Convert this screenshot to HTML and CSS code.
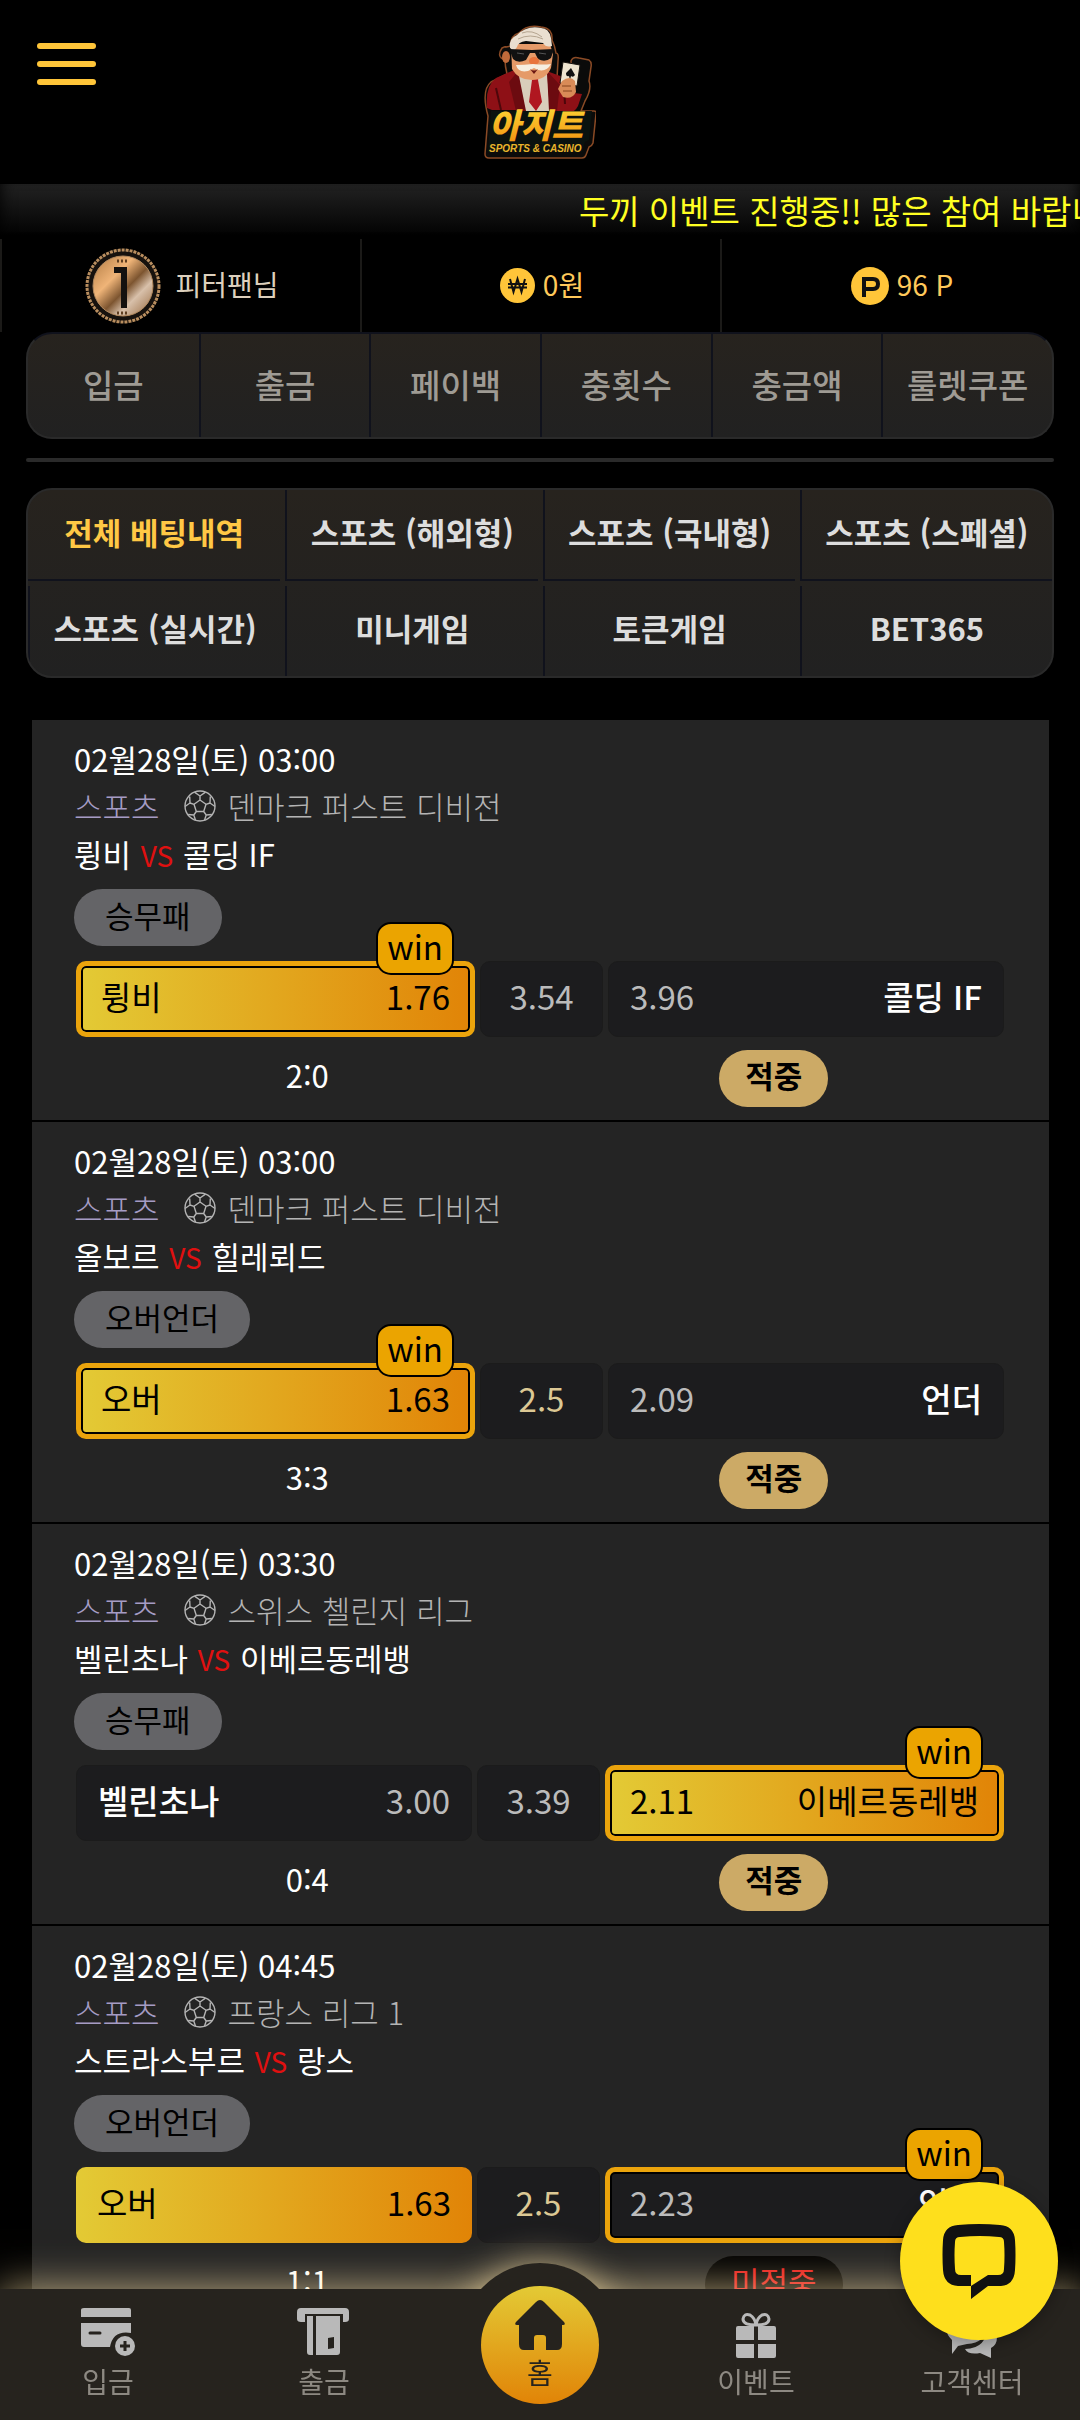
FILE: index.html
```html
<!DOCTYPE html>
<html lang="ko">
<head>
<meta charset="utf-8">
<meta name="viewport" content="width=device-width, initial-scale=1">
<title>아지트 - 베팅내역</title>
<link rel="stylesheet" href="styles.css">
</head>
<body>
<svg class="defs" width="0" height="0" aria-hidden="true">
  <symbol id="ball" viewBox="0 0 32 32">
    <g fill="none" stroke="currentColor" stroke-width="1.4" stroke-linejoin="round">
      <circle cx="16" cy="16" r="15"/>
      <path d="M16 10l6 4.300-2.300 7.200h-7.400L10 14.300zM16 10V6M22 14.300l4-1.300M19.700 21.500l2.500 3.500M12.300 21.500L9.800 25M10 14.300L6 13M16 6l-5.500-3.800M16 6l5.500-3.800M26 13l.300-6.500M26 13l5 3.500M22.200 25l5.700-.500M22.200 25l-1.700 5.200M9.800 25l1.700 5.200M9.800 25l-5.700-.500M6 13l-5 3.500M6 13l-.300-6.500"/>
    </g>
  </symbol>
</svg>

<header class="top">
  <button class="menu-btn" aria-label="메뉴"><span></span><span></span><span></span></button>
  <a class="logo" href="#" aria-label="아지트 SPORTS &amp; CASINO">
    <svg viewBox="0 0 112 136" width="112" height="136">
      <defs>
        <linearGradient id="gold" x1="0" y1="0" x2="0" y2="1"><stop offset="0" stop-color="#ffe23c"/><stop offset="1" stop-color="#f08a0c"/></linearGradient>
      </defs>
      <path d="M27 22q-1-10 8-13q8-9 22-6q12 1 11 13q3 6 4 13q3 0 2 8l-1 17q1 7-3 12l14 6 4-8-1-27q2-5 8-3l10 2q3 2 2 7l-2 14q3 8-4 20l-4 10h13q3 0 2 3l-3 29q-1 3-4 4l-3 8q-1 3-4 3H5q-4 0-4-4l3-38q-7-26 3-34l16-8q-2-8-2-14q-9-3-3-12q4-2 4-1z" fill="#0b0b0a" stroke="#8a4a25" stroke-width="1.500"/>
      <path d="M3 84q-2-22 9-30l18-8 14 40H8z" fill="#8e1016"/>
      <path d="M60 46l19 7q8 8 11 16l8 1-4 12q-4 8-12 6H60z" fill="#8e1016"/>
      <path d="M12 64l5 22M80 64l1 16" stroke="#4d070b" stroke-width="2"/>
      <path d="M34 47l14 5 15-5 3 40H38z" fill="#d9cdbb"/>
      <path d="M34 47l8 40H32L25 58zM63 47l2 40h8l3-26z" fill="#6c0b10"/>
      <path d="M46 50h9l-1 6 4 22-6 9-7-9 3-22z" fill="#b01720"/>
      <ellipse cx="22" cy="33" rx="4" ry="6" fill="#c06a3a"/>
      <path d="M27 20h39l3 10-2 14q-5 12-19 12t-20-11z" fill="#e59a68"/>
      <path d="M26 24q-2-9 7-13q10-10 24-7q8 0 10 10l1 8q-6 2-9-3l-17-2q-8 1-9 6l-3 4z" fill="#eadfd0"/>
      <path d="M38 9q10-4 20 4M34 15q12-6 25 0" fill="none" stroke="#b5a590" stroke-width="1"/>
      <path d="M25 25l23 1 22-1-3 9q-6 5-13 1l-3-6h-5l-4 7q-8 4-13-1l-3-8z" fill="#111"/>
      <path d="M33 29l7 1M55 29l7 1" stroke="#555"/>
      <ellipse cx="50" cy="37" rx="5" ry="4" fill="#e8743c"/>
      <path d="M32 41q8 0 17-1q10 1 18 0q-4 8-13 6l-4-2-6 3q-10 2-12-6z" fill="#f6eee0"/>
      <path d="M46 45q4 3 8 0l-4 5z" fill="#6a1712"/>
      <path d="M79 38l17 3-3 21-17-3z" fill="#eee4cf" stroke="#17130f"/>
      <path d="M87 44l4 7q-2 3-4 1l-1 4-1-4q-3 1-3-3z" fill="#111"/>
      <path d="M78 57q8-6 13 0l1 11q-4 8-13 5l-5-8z" fill="#d98b57"/>
      <path d="M78 62h9M79 67h9" stroke="#86441f"/>
      <path d="M7 87h101l-3 29-4 2-3 10H4z" fill="#0a120f"/>
      <text class="logo-ko" x="5" y="114">아지트</text>
      <text class="logo-en" x="5" y="128" fill="#eab52b">SPORTS &amp; CASINO</text>
    </svg>
  </a>
</header>

<div class="notice"><p>두끼 이벤트 진행중!! 많은 참여 바랍니다</p></div>

<section class="stats">
  <div>
    <svg width="76" height="78" viewBox="0 0 76 78" aria-hidden="true">
      <defs><linearGradient id="bronze" x1="0" y1="0" x2="1" y2="1"><stop offset="0" stop-color="#b07a42"/><stop offset=".35" stop-color="#efb478"/><stop offset=".55" stop-color="#7d5530"/><stop offset=".7" stop-color="#d8c0aa"/><stop offset="1" stop-color="#95663c"/></linearGradient></defs>
      <circle cx="38" cy="39" r="36" fill="#17120e" stroke="#b98e5f" stroke-width="3" stroke-dasharray="3 1"/>
      <circle cx="38" cy="39" r="30" fill="url(#bronze)" stroke="#b38a5f" stroke-width="1"/>
      <path d="M29 20h13v41h-6V26h-7z" fill="#14110f"/>
      <path d="M32 14h12M32 66h12" stroke="#5d3d20" stroke-width="3" stroke-dasharray="2 2"/>
    </svg>
    <span class="member">피터팬님</span>
  </div>
  <div class="gold">
    <svg width="35" height="35" viewBox="0 0 35 35" aria-hidden="true"><circle cx="17.500" cy="17.500" r="17.500" fill="#ffc539"/><path d="M10 11l3.500 13 4-13 4 13 3.500-13M8 16h19M8 19.500h19" fill="none" stroke="#111" stroke-width="2"/></svg>
    <span>0원</span>
  </div>
  <div class="gold">
    <svg width="38" height="38" viewBox="0 0 38 38" aria-hidden="true"><circle cx="19" cy="19" r="19" fill="#ffc539"/><path d="M13 30V12h9q5 0 5 5t-5 5h-9" fill="none" stroke="#111" stroke-width="4"/></svg>
    <span>96 P</span>
  </div>
</section>

<main>
  <nav class="quick">
    <a href="#">입금</a><a href="#">출금</a><a href="#">페이백</a><a href="#">충횟수</a><a href="#">충금액</a><a href="#">룰렛쿠폰</a>
  </nav>
  <hr>
  <nav class="tabs">
    <a href="#" class="on">전체 베팅내역</a><a href="#">스포츠 (해외형)</a><a href="#">스포츠 (국내형)</a><a href="#">스포츠 (스페셜)</a>
    <a href="#">스포츠 (실시간)</a><a href="#">미니게임</a><a href="#">토큰게임</a><a href="#">BET365</a>
  </nav>

  <section class="bets">
    <article class="bet">
      <p>02월28일(토) 03:00</p>
      <p class="league"><span class="sport">스포츠</span><svg width="32" height="32"><use href="#ball"/></svg>덴마크 퍼스트 디비전</p>
      <p class="teams">륑비 <em>VS</em> 콜딩 IF</p>
      <span class="kind">승무패</span>
      <div class="odds">
        <div class="pick win sel"><span>륑비</span><span>1.76</span><b>win</b></div>
        <div class="mid">3.54</div>
        <div class="pick"><span class="num">3.96</span><span>콜딩 IF</span></div>
      </div>
      <div class="result"><span>2:0</span><strong class="hit">적중</strong></div>
    </article>
    <article class="bet">
      <p>02월28일(토) 03:00</p>
      <p class="league"><span class="sport">스포츠</span><svg width="32" height="32"><use href="#ball"/></svg>덴마크 퍼스트 디비전</p>
      <p class="teams">올보르 <em>VS</em> 힐레뢰드</p>
      <span class="kind">오버언더</span>
      <div class="odds">
        <div class="pick win sel"><span>오버</span><span>1.63</span><b>win</b></div>
        <div class="mid line">2.5</div>
        <div class="pick"><span class="num">2.09</span><span>언더</span></div>
      </div>
      <div class="result"><span>3:3</span><strong class="hit">적중</strong></div>
    </article>
    <article class="bet">
      <p>02월28일(토) 03:30</p>
      <p class="league"><span class="sport">스포츠</span><svg width="32" height="32"><use href="#ball"/></svg>스위스 첼린지 리그</p>
      <p class="teams">벨린초나 <em>VS</em> 이베르동레뱅</p>
      <span class="kind">승무패</span>
      <div class="odds">
        <div class="pick"><span>벨린초나</span><span class="num">3.00</span></div>
        <div class="mid">3.39</div>
        <div class="pick win sel"><span>2.11</span><span>이베르동레뱅</span><b>win</b></div>
      </div>
      <div class="result"><span>0:4</span><strong class="hit">적중</strong></div>
    </article>
    <article class="bet">
      <p>02월28일(토) 04:45</p>
      <p class="league"><span class="sport">스포츠</span><svg width="32" height="32"><use href="#ball"/></svg>프랑스 리그 1</p>
      <p class="teams">스트라스부르 <em>VS</em> 랑스</p>
      <span class="kind">오버언더</span>
      <div class="odds">
        <div class="pick sel"><span>오버</span><span>1.63</span></div>
        <div class="mid line">2.5</div>
        <div class="pick win"><span class="num">2.23</span><span>언더</span><b>win</b></div>
      </div>
      <div class="result"><span>1:1</span><strong class="miss">미적중</strong></div>
    </article>
  </section>
</main>

<nav class="bottom">
  <a href="#">
    <svg width="54" height="50" viewBox="0 0 54 50" aria-hidden="true"><g fill="#b9b9b9"><path d="M3 0h45q2 0 2 2v7H0V2q0-2 3-2zM0 15h50v10q-18-3-21 14H3q-3 0-3-3z"/><circle cx="44" cy="38" r="10"/></g><path d="M9 25h10" stroke="#26231e" stroke-width="3" stroke-linecap="round"/><path d="M39 38h10M44 33v10" stroke="#26231e" stroke-width="3"/></svg>
    <span>입금</span>
  </a>
  <a href="#">
    <svg width="54" height="50" viewBox="0 0 54 50" aria-hidden="true"><g fill="#b9b9b9"><path d="M4 0h44q4 0 4 4v7q0 3-4 3h-2V6H8v8H4q-4 0-4-3V4q0-4 4-4z"/><path d="M10 8h6v39h-3q-3 0-3-3zM19 8h24v36q0 3-3 3H19z"/></g><path d="M31 30l6-1v11l-6 1z" fill="#26231e"/></svg>
    <span>출금</span>
  </a>
  <a href="#" class="home">
    <span class="home-disc">
      <svg width="50" height="50" viewBox="0 0 50 50" aria-hidden="true"><path d="M25 0q2 0 4 2l20 20q2 3-1 3h-1v19q0 6-5 6H31V38q0-3-3-3h-6q-3 0-3 3v12H9q-5 0-5-6V25H2q-3 0-1-3L21 2q2-2 4-2z" fill="#26231e"/></svg>
      <span>홈</span>
    </span>
  </a>
  <a href="#">
    <svg width="54" height="50" viewBox="0 0 54 50" aria-hidden="true"><g fill="#b9b9b9"><path d="M9 18h16v14H7V20q0-2 2-2zM29 18h16q2 0 2 2v12H29zM7 36h18v14H9q-2 0-2-2zM29 36h18v12q0 2-2 2H29z"/></g><path d="M27 17Q14 17 14 11q1-6 7-4 5 3 6 10 1-7 6-10 6-2 7 4 0 6-13 6z" fill="none" stroke="#b9b9b9" stroke-width="3"/></svg>
    <span>이벤트</span>
  </a>
  <a href="#">
    <svg width="54" height="50" viewBox="0 0 54 50" aria-hidden="true"><path d="M22 4q18 0 19 15t-19 17l-9 2-6 8 0-14Q0 26 2 17 6 4 22 4z" fill="#b9b9b9"/><path d="M44 15q8 6 8 14t-6 11v10l-11-5q-12 2-15-4 22 0 24-26z" fill="#b9b9b9"/></svg>
    <span>고객센터</span>
  </a>
</nav>

<button class="chat" aria-label="채팅 상담">
  <svg width="74" height="75" viewBox="0 0 74 75" aria-hidden="true"><path fill-rule="evenodd" d="M16 1q21-2 42 0 14 1 15 15 1 15 0 30-1 15-14 16H46L29 75V62H16Q2 61 1 46 0 31 1 16 2 2 16 1zM18 13q-5 0-5 5-1 13 0 27 0 6 6 6H29V62L46 51H56q6 0 6-6 1-14 0-27 0-5-5-5-19-2-39 0z" fill="#111"/></svg>
</button>
</body>
</html>
```

FILE: styles.css
```css
* { box-sizing: border-box; }

body {
  margin: 0;
  background: #000;
  color: #fff;
  font-family: "Noto Sans CJK KR", "Noto Sans", sans-serif;
  font-size: 31px;
  line-height: 48px;
  height: 100vh;
  overflow: hidden;
}

a { color: inherit; text-decoration: none; }
p { margin: 0; }
svg { display: block; flex: none; }
button { border: 0; padding: 0; cursor: pointer; }
.defs { position: absolute; }

/* Header */
.top {
  display: grid;
  grid-template-columns: 1fr auto 1fr;
  align-items: start;
  height: 184px;
  padding: 24px 37px;
}
.menu-btn {
  display: flex;
  flex-direction: column;
  gap: 12px;
  width: 59px;
  margin-top: 19px;
  background: none;
}
.menu-btn span { height: 6px; border-radius: 3px; background: #ffc539; }
.logo-ko { font-size: 34px; font-weight: 900; font-style: italic; fill: url(#gold); }
.logo-en { font: italic bold 10px "Liberation Sans", sans-serif; }

.notice {
  height: 55px;
  padding-left: 53.600%;
  overflow: hidden;
  white-space: nowrap;
  color: #ff2;
  font-size: 33px;
  line-height: 52px;
  background: linear-gradient(#222, #000);
  box-shadow: inset 12px 0 16px -12px #000, inset -12px 0 16px -12px #000;
}

/* Member summary */
.stats {
  display: grid;
  grid-template-columns: repeat(3, 1fr);
  height: 93px;
  font-size: 28px;
}
.stats > div {
  display: flex;
  align-items: center;
  justify-content: center;
  gap: 8px;
  padding-left: 2px;
  border-left: 2px solid #1b1a18;
}
.stats span { padding-bottom: 4px; }
.stats .member { margin-left: 6px; color: #ddd0bd; }
.gold { color: #ffc95a; }

main { padding: 0 26px; }

.quick {
  display: grid;
  grid-template-columns: repeat(6, 1fr);
  height: 107px;
  border: 2px solid #2a2a2a;
  border-top-color: #10121c;
  border-radius: 26px;
  overflow: hidden;
  background: linear-gradient(#27231e, #212121);
  color: #9f9b94;
  font-size: 33px;
  font-weight: 500;
}
.quick a { display: grid; place-items: center; padding-bottom: 4px; }
.quick a + a { border-left: 2px solid #10121c; }

hr { height: 4px; margin: 19px 0 26px; border: 0; border-radius: 2px; background: #2a2a2a; }

.tabs {
  display: grid;
  grid-template-columns: repeat(4, 1fr);
  grid-template-rows: 91px 90px;
  gap: 5px;
  border: 2px solid #2a2a2a;
  border-radius: 26px;
  overflow: hidden;
  background: linear-gradient(#27231e, #212121);
  color: #ddd;
  font-weight: 700;
}
.tabs a { display: grid; place-items: center; padding-bottom: 6px; border-left: 2px solid #10121c; }
.tabs a:first-child { border-left: 0; }
.tabs a:nth-child(-n+4) { border-bottom: 2px solid #10121c; }
.tabs .on { color: #ffc845; }

/* Betting history */
.bets { margin: 42px 5px 0 6px; }
.bet {
  height: 402px;
  padding: 15px 42px 0;
  border-bottom: 2px solid #000;
  background: #242424;
}
.league { display: flex; align-items: center; gap: 12px; line-height: 46px; color: #b4b4b4; font-weight: 300; }
.league .sport { margin-right: 12px; color: #a59cc4; }
.teams { line-height: 50px; }
.teams em { color: #e01010; font-style: normal; font-size: 28px; margin: 0 1px; }
.kind {
  display: block;
  width: fit-content;
  height: 57px;
  margin-top: 9px;
  padding: 0 31px;
  border-radius: 29px;
  background: #646467;
  color: #000;
  line-height: 52px;
}
.odds {
  display: flex;
  gap: 5px;
  height: 76px;
  margin: 15px 3px 0 2px;
  font-size: 33px;
}
.pick, .mid { padding-bottom: 6px; border: 1px solid #1b1b1b; border-radius: 10px; background: #1c1c1e; }
.pick {
  position: relative;
  flex: 1 1 60px;
  display: flex;
  align-items: center;
  justify-content: space-between;
  padding: 0 21px 6px;
  font-weight: 500;
}
.mid { flex: 0 0 123px; display: grid; place-items: center; color: #bbb; font-weight: 400; }
.mid.line { color: #dcc894; }
.pick .num { color: #bbb; font-weight: 400; }
.sel { border: 0; background: linear-gradient(to right, #e3ca35, #e18407); color: #000; font-weight: 400; }
.win {
  flex-basis: 63px;
  padding: 0 20px 6px;
  border: 5px solid #eba40c;
  box-shadow: inset 0 0 0 2px #000;
  background-origin: padding-box;
}
.pick b {
  position: absolute;
  right: 16px;
  top: -44px;
  height: 53px;
  padding: 0 9px;
  border: 2px solid #000;
  border-radius: 15px;
  background: #eba400;
  color: #000;
  font-weight: 400;
  line-height: 44px;
}
.result {
  display: grid;
  grid-template-columns: 1fr 1fr;
  justify-items: center;
  height: 57px;
  margin-top: 13px;
}
.result span, .result strong { line-height: 50px; }
.result strong { padding: 0 26px; border-radius: 29px; }
.hit { background: #ccaa66; color: #000; font-weight: 700; }
.miss { background: #000; color: #e81c1c; font-weight: 400; }

/* Bottom navigation */
.bottom {
  position: fixed;
  left: 0;
  right: 0;
  bottom: 0;
  display: grid;
  grid-template-columns: repeat(5, 1fr);
  height: 131px;
  background: #26231e;
  box-shadow: 0 0 40px rgba(255, 230, 170, .7);
  color: #8d8982;
  font-size: 28px;
  line-height: 36px;
}
.bottom > a { display: flex; flex-direction: column; align-items: center; padding-top: 19px; gap: 5px; }
.bottom .home { position: relative; padding: 0; color: #26231e; }
.home::before {
  content: "";
  position: absolute;
  top: -26px;
  left: calc(50% - 80px);
  width: 160px;
  height: 160px;
  border-radius: 50%;
  background: #26231e;
  box-shadow: 0 0 36px rgba(255, 230, 170, .7);
  clip-path: inset(-60px -60px 134px);
}
.home-disc {
  position: relative;
  display: flex;
  flex-direction: column;
  align-items: center;
  width: 118px;
  height: 118px;
  margin-top: -3px;
  padding-top: 14px;
  gap: 4px;
  border-radius: 50%;
  background: linear-gradient(#e3ca35, #e18407);
}

.chat {
  position: fixed;
  right: 22px;
  bottom: 80px;
  display: grid;
  place-items: center;
  width: 158px;
  height: 158px;
  border-radius: 50%;
  background: #fedf1c;
  box-shadow: 0 4px 16px rgba(0, 0, 0, .3);
}
```
